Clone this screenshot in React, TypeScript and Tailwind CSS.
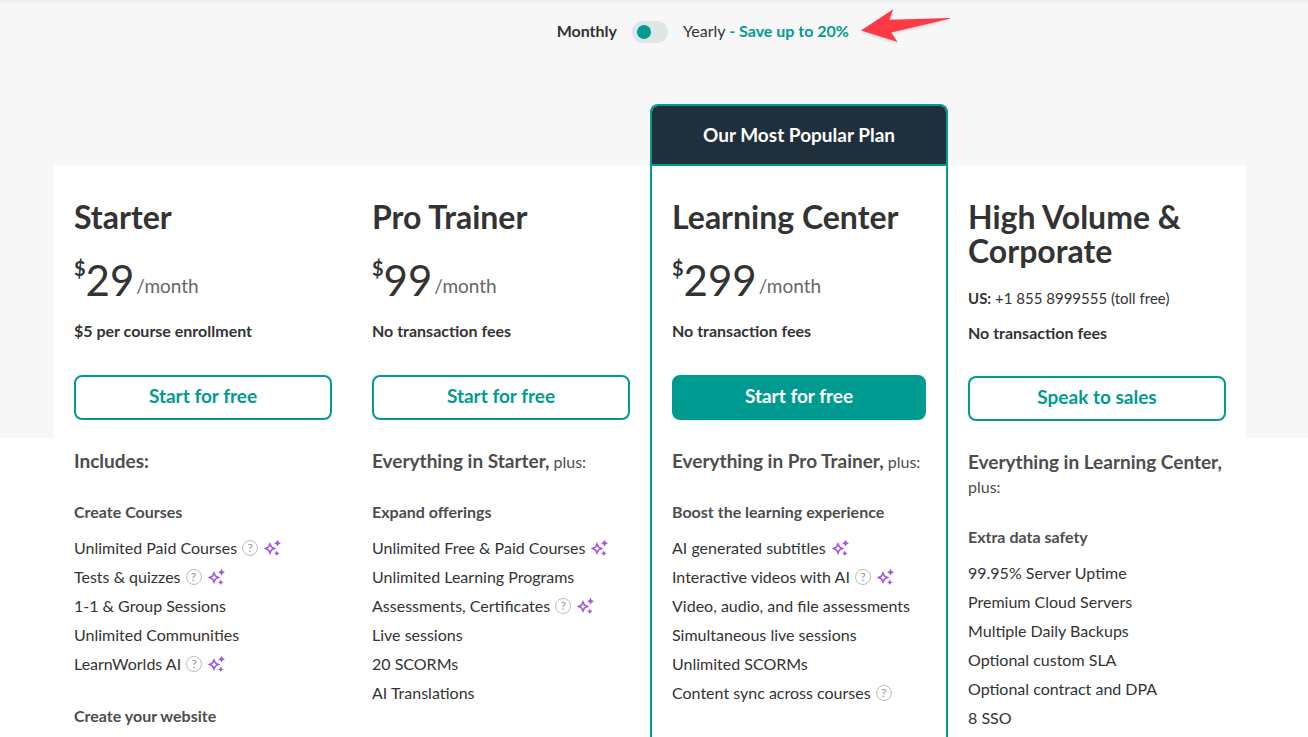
import React, { useState } from 'react';
import clsx from 'clsx';

interface Feature {
  name: string;
  help?: boolean;
  ai?: boolean;
}

interface FeatureGroup {
  title: string;
  features: Feature[];
}

interface Plan {
  name: string;
  price?: number;
  phone?: string;
  fees: string;
  cta: string;
  includes: string;
  plus?: boolean;
  popular?: boolean;
  groups: FeatureGroup[];
}

const plans: Plan[] = [
  {
    name: 'Starter',
    price: 29,
    fees: '$5 per course enrollment',
    cta: 'Start for free',
    includes: 'Includes:',
    groups: [
      {
        title: 'Create Courses',
        features: [
          { name: 'Unlimited Paid Courses', help: true, ai: true },
          { name: 'Tests & quizzes', help: true, ai: true },
          { name: '1-1 & Group Sessions' },
          { name: 'Unlimited Communities' },
          { name: 'LearnWorlds AI', help: true, ai: true },
        ],
      },
      { title: 'Create your website', features: [] },
    ],
  },
  {
    name: 'Pro Trainer',
    price: 99,
    fees: 'No transaction fees',
    cta: 'Start for free',
    includes: 'Everything in Starter,',
    plus: true,
    groups: [
      {
        title: 'Expand offerings',
        features: [
          { name: 'Unlimited Free & Paid Courses', ai: true },
          { name: 'Unlimited Learning Programs' },
          { name: 'Assessments, Certificates', help: true, ai: true },
          { name: 'Live sessions' },
          { name: '20 SCORMs' },
          { name: 'AI Translations' },
        ],
      },
    ],
  },
  {
    name: 'Learning Center',
    price: 299,
    fees: 'No transaction fees',
    cta: 'Start for free',
    includes: 'Everything in Pro Trainer,',
    plus: true,
    popular: true,
    groups: [
      {
        title: 'Boost the learning experience',
        features: [
          { name: 'AI generated subtitles', ai: true },
          { name: 'Interactive videos with AI', help: true, ai: true },
          { name: 'Video, audio, and file assessments' },
          { name: 'Simultaneous live sessions' },
          { name: 'Unlimited SCORMs' },
          { name: 'Content sync across courses', help: true },
        ],
      },
    ],
  },
  {
    name: 'High Volume & Corporate',
    phone: '+1 855 8999555 (toll free)',
    fees: 'No transaction fees',
    cta: 'Speak to sales',
    includes: 'Everything in Learning Center,',
    plus: true,
    groups: [
      {
        title: 'Extra data safety',
        features: [
          { name: '99.95% Server Uptime' },
          { name: 'Premium Cloud Servers' },
          { name: 'Multiple Daily Backups' },
          { name: 'Optional custom SLA' },
          { name: 'Optional contract and DPA' },
          { name: '8 SSO' },
        ],
      },
    ],
  },
];

const SparkleIcon = () => (
  <svg width="18" height="18" viewBox="0 0 18 18" fill="#a259e6" className="shrink-0" aria-hidden="true">
    <path
      fillRule="evenodd"
      d="M7 3 L9.1 7.4 L13.4 9.5 L9.1 11.6 L7 16 L4.9 11.6 L.6 9.5 L4.9 7.4 Z M7 7.1 L6.1 8.6 L4.6 9.5 L6.1 10.4 L7 11.9 L7.9 10.4 L9.4 9.5 L7.9 8.6 Z"
    />
    <path d="M14.5 .8 L15.7 3 L17.9 4.2 L15.7 5.4 L14.5 7.6 L13.3 5.4 L11.1 4.2 L13.3 3 Z" />
    <path d="M13.8 11.5 L14.8 13.4 L16.6 14.3 L14.8 15.2 L13.8 17.1 L12.8 15.2 L11 14.3 L12.8 13.4 Z" />
  </svg>
);

const ArrowPointer = () => (
  <svg
    width="90"
    height="36"
    viewBox="0 0 90 36"
    className="shrink-0 drop-shadow-[0_2px_1px_rgba(0,0,0,0.1)]"
    aria-hidden="true"
  >
    <path d="M0 23.5 L32.2 2.2 L28.4 12.8 L88.8 11 V11.8 L30.2 25.6 L36.6 35 Z" fill="#fd3945" />
  </svg>
);

const HelpButton = ({ topic }: { topic: string }) => (
  <button
    type="button"
    aria-label={`About ${topic}`}
    className="flex size-4 shrink-0 items-center justify-center rounded-full border border-[#b9bebe] text-xs leading-none text-[#8f9494]"
  >
    ?
  </button>
);

const BillingToggle = () => {
  const [yearly, setYearly] = useState(false);

  return (
    <div className="grid grid-cols-[1fr_auto_1fr] items-end gap-[15px] text-base leading-6">
      <span className="text-right font-bold">Monthly</span>
      <input
        id="billing"
        type="checkbox"
        role="switch"
        checked={yearly}
        onChange={(e) => setYearly(e.target.checked)}
        className="flex h-[22px] w-9 appearance-none items-center rounded-full bg-[#dfe7e6] px-[5px] before:size-3.5 before:rounded-full before:bg-[#009b90] checked:justify-end"
      />
      <div className="flex items-end gap-3">
        <label htmlFor="billing">
          Yearly <span className="font-bold text-[#009b90]">- Save up to 20%</span>
        </label>
        <ArrowPointer />
      </div>
    </div>
  );
};

const PlanCard = ({ plan }: { plan: Plan }) => (
  <article
    className={clsx(
      'flex flex-col bg-white',
      plan.popular ? 'overflow-hidden rounded-t-lg border-x-2 border-t-2 border-[#009b90]' : 'mt-[61px]'
    )}
  >
    {plan.popular && (
      <div className="flex h-[60px] items-center justify-center border-b-2 border-[#009b90] bg-[#202f3c] text-[19px] font-bold text-white">
        Our Most Popular Plan
      </div>
    )}

    <div className={clsx('flex flex-col px-5 pb-5', plan.popular ? 'pt-[34px]' : 'pt-[35px]')}>
      <h2 className="text-[32px] leading-[34px] font-bold">{plan.name}</h2>

      {plan.price ? (
        <p className="mt-[22px] flex items-start leading-[48px]">
          <span className="text-xl leading-6 font-bold">$</span>
          <span className="text-[42px]">{plan.price}</span>
          <span className="ml-0.5 self-end text-[19px] leading-9 text-[#666]">/month</span>
        </p>
      ) : (
        <p className="mt-[18px] text-[15px] leading-6">
          <b>US:</b> {plan.phone}
        </p>
      )}

      <p className={clsx('text-base leading-6 font-bold', plan.price ? 'mt-[15px]' : 'mt-[11px]')}>{plan.fees}</p>

      <button
        type="button"
        className={clsx(
          'h-[45px] rounded-lg border-2 border-[#009b90] pb-1 text-[19px] leading-6 font-bold',
          plan.price ? 'mt-8' : 'mt-[31px]',
          plan.popular ? 'bg-[#009b90] text-white' : 'bg-white text-[#009b90]'
        )}
      >
        {plan.cta}
      </button>

      <p className="mt-[30px] text-base leading-6 text-[#4d4d4d]">
        <strong className="text-[19px] leading-none">{plan.includes}</strong>
        {plan.plus && ' plus:'}
      </p>

      {plan.groups.map((group) => (
        <section key={group.title} className="mt-[26px]">
          <h3 className="text-base leading-6 font-bold text-[#4d4d4d]">{group.title}</h3>
          <ul className="mt-[9px]">
            {group.features.map((feature) => (
              <li key={feature.name} className="flex h-[29px] items-center gap-[5px] text-base">
                <span>{feature.name}</span>
                {feature.help && <HelpButton topic={feature.name} />}
                {feature.ai && <SparkleIcon />}
              </li>
            ))}
          </ul>
        </section>
      ))}
    </div>
  </article>
);

const App: React.FC = () => {
  return (
    <main className="flex min-h-screen flex-col border-t-3 border-[#efefef] bg-[linear-gradient(#f7f7f7_435px,#fff_435px)] pr-[62px] pl-[54px] font-['Lato',sans-serif] text-[#333]">
      <div className="flex h-[101px] flex-col pt-1">
        <BillingToggle />
      </div>
      <div className="grid flex-1 grid-cols-4">
        {plans.map((plan) => (
          <PlanCard key={plan.name} plan={plan} />
        ))}
      </div>
    </main>
  );
};

export default App;
